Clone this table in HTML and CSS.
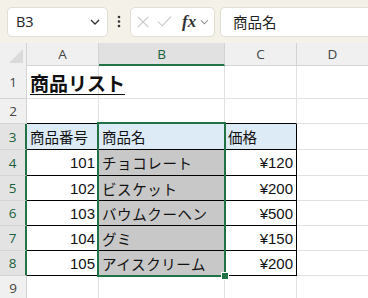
FILE: index.html
```html
<!DOCTYPE html>
<html lang="ja">
<head>
    <meta charset="UTF-8">
    <title>商品リスト</title>
    <link rel="stylesheet" href="styles.css">
</head>
<body>
    <div class="toolbar">
        <div class="namebox">
            <span>B3</span>
            <svg class="chev" width="10" height="6" viewBox="0 0 10 6"><path d="M1 1l4 4 4-4" fill="none" stroke="#333" stroke-width="1.3"/></svg>
        </div>
        <svg class="grip" width="4" height="13" viewBox="0 0 4 13"><circle cx="2" cy="2" r="1.3" fill="#333"/><circle cx="2" cy="6.5" r="1.3" fill="#333"/><circle cx="2" cy="11" r="1.3" fill="#333"/></svg>
        <div class="fxbox">
            <svg width="14" height="14" viewBox="0 0 14 14"><path d="M1 1l12 12M13 1L1 13" stroke="#c4c4c4" stroke-width="1.2"/></svg>
            <svg width="17" height="13" viewBox="0 0 17 13"><path d="M1 6.5l5 5L16 1" fill="none" stroke="#c4c4c4" stroke-width="1.2"/></svg>
            <span class="fx">fx</span>
            <svg width="10" height="6" viewBox="0 0 10 6"><path d="M1 1l4 4 4-4" fill="none" stroke="#888" stroke-width="1.2"/></svg>
        </div>
        <div class="formula">商品名</div>
    </div>

    <div class="sheet">
        <!-- column headers -->
        <div class="corner"></div>
        <div class="colhead">A</div>
        <div class="colhead sel">B</div>
        <div class="colhead">C</div>
        <div class="colhead">D</div>

        <!-- row 1 -->
        <div class="rowhead">1</div>
        <div class="cell title">商品リスト</div>
        <div class="cell"></div>
        <div class="cell"></div>
        <div class="cell"></div>

        <!-- row 2 -->
        <div class="rowhead">2</div>
        <div class="cell above"></div>
        <div class="cell above"></div>
        <div class="cell above"></div>
        <div class="cell"></div>

        <!-- row 3 -->
        <div class="rowhead sel">3</div>
        <div class="cell t head">商品番号</div>
        <div class="cell t head">商品名</div>
        <div class="cell t head">価格</div>
        <div class="cell"></div>

        <div class="rowhead sel">4</div>
        <div class="cell t num">101</div>
        <div class="cell t shade">チョコレート</div>
        <div class="cell t num">¥120</div>
        <div class="cell"></div>

        <div class="rowhead sel">5</div>
        <div class="cell t num">102</div>
        <div class="cell t shade">ビスケット</div>
        <div class="cell t num">¥200</div>
        <div class="cell"></div>

        <div class="rowhead sel">6</div>
        <div class="cell t num">103</div>
        <div class="cell t shade">バウムクーヘン</div>
        <div class="cell t num">¥500</div>
        <div class="cell"></div>

        <div class="rowhead sel">7</div>
        <div class="cell t num">104</div>
        <div class="cell t shade">グミ</div>
        <div class="cell t num">¥150</div>
        <div class="cell"></div>

        <div class="rowhead sel">8</div>
        <div class="cell t num">105</div>
        <div class="cell t shade">アイスクリーム</div>
        <div class="cell t num">¥200</div>
        <div class="cell"></div>

        <div class="rowhead">9</div>
        <div class="cell"></div>
        <div class="cell"></div>
        <div class="cell"></div>
        <div class="cell"></div>

        <!-- selected range B3:B8 -->
        <div class="selection"><span class="handle"></span></div>
    </div>
</body>
</html>
```

FILE: styles.css
```css
body {
    margin: 0;
    font-family: "Noto Sans CJK JP", sans-serif;
    background: #fff;
    overflow: hidden;
}
.toolbar {
    display: flex;
    align-items: center;
    height: 43px;
    padding: 0 0 0 7px;
    box-sizing: border-box;
    background: #f4f1e8;
}
.namebox {
    display: flex;
    align-items: center;
    justify-content: space-between;
    width: 101px;
    height: 30px;
    box-sizing: border-box;
    padding: 0 7px 0 8px;
    background: #fff;
    border: 1px solid #e2ded4;
    border-radius: 5px;
    font-family: "Open Sans", "Noto Sans", sans-serif;
    font-size: 14.5px;
    color: #222;
}
.grip {
    margin: 0 9px 0 9px;
}
.fxbox {
    display: flex;
    align-items: center;
    gap: 8px;
    width: 85px;
    height: 30px;
    box-sizing: border-box;
    padding: 0 5px 0 6px;
    background: #fff;
    border: 1px solid #e2ded4;
    border-radius: 5px;
}
.fx {
    font-family: "Liberation Serif", serif;
    font-style: italic;
    font-weight: bold;
    font-size: 17px;
    color: #333;
    margin-left: 2px;
    margin-right: -4px;
}
.formula {
    flex: 1;
    height: 30px;
    margin-left: 5px;
    box-sizing: border-box;
    padding: 3px 0 0 12px;
    background: #fff;
    border: 1px solid #e2ded4;
    border-right: none;
    border-radius: 5px 0 0 5px;
    font-size: 14.5px;
    color: #222;
}

.sheet {
    position: relative;
    display: grid;
    grid-template-columns: 27px 72px 126px 72px 72px;
    grid-template-rows: 23px 33px 25px 26px 26px 25px 25px 25px 25px 25px;
}
.corner {
    background: #f0f0f0;
    border-right: 1px solid #d4d4d4;
    position: relative;
    overflow: hidden;
}
.corner::after {
    content: "";
    position: absolute;
    right: 3px;
    bottom: 3px;
    border-left: 14px solid transparent;
    border-bottom: 14px solid #dadada;
}
.colhead {
    display: flex;
    align-items: center;
    justify-content: center;
    background: #f0f0f0;
    border-right: 1px solid #d4d4d4;
    border-bottom: 1px solid #d4d4d4;
    font-family: "Open Sans", "Noto Sans", sans-serif;
    font-size: 13.5px;
    color: #444;
}
.colhead.sel {
    background: #e1e1e1;
    border-bottom: 2px solid #217346;
    color: #17603a;
}
.rowhead {
    display: flex;
    align-items: center;
    justify-content: center;
    background: #f0f0f0;
    border-right: 1px solid #d4d4d4;
    border-bottom: 1px solid #d4d4d4;
    font-family: "Open Sans", "Noto Sans", sans-serif;
    font-size: 13.5px;
    color: #444;
}
.rowhead.sel {
    background: #e3e3e3;
    border-right: 2px solid #217346;
    color: #17603a;
}
.cell {
    display: flex;
    align-items: center;
    padding: 0 3px;
    border-right: 1px solid #e1e1e1;
    border-bottom: 1px solid #e1e1e1;
    font-size: 14.5px;
    color: #111;
    white-space: nowrap;
    overflow: visible;
    min-width: 0;
}
.cell.above {
    border-bottom-color: #000;
}
.cell.t {
    border-right-color: #000;
    border-bottom-color: #000;
}
.title {
    font-size: 19px;
    font-weight: bold;
    text-decoration: underline;
    text-underline-offset: 3px;
    position: relative;
    z-index: 1;
}
.head {
    background: #ddebf7;
}
.shade {
    background: #c8c8c8;
    letter-spacing: 0.6px;
}
.num {
    justify-content: flex-end;
    font-family: "Liberation Sans", sans-serif;
    font-size: 15px;
}
/* absolutely placed in the grid area of B3:B8, so it skips auto placement */
.selection {
    position: absolute;
    grid-column: 3 / 4;
    grid-row: 4 / 10;
    top: -2px;
    left: -2px;
    right: -1px;
    bottom: -1px;
    border: 2px solid #217346;
    pointer-events: none;
}
.handle {
    position: absolute;
    right: -5px;
    bottom: -5px;
    width: 6px;
    height: 6px;
    background: #217346;
    border: 1px solid #fff;
}
```
